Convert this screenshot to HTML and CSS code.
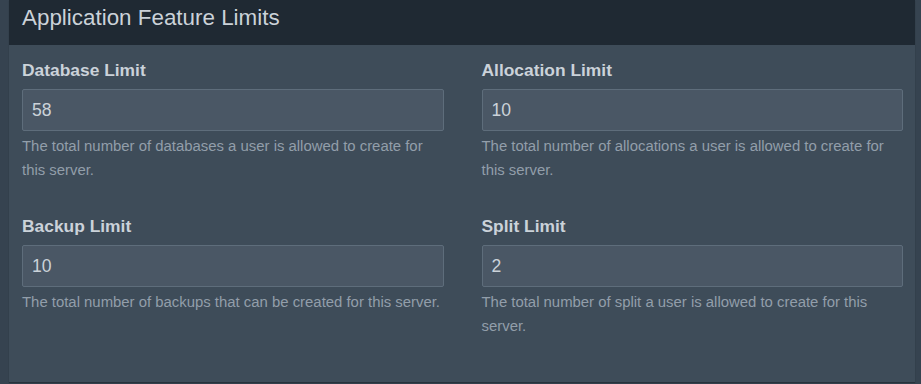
FILE: index.html
```html
<!DOCTYPE html>
<html>
<head>
<meta charset="utf-8">
<link rel="stylesheet" href="styles.css">
</head>
<body>
<div class="page">
  <div class="box">
    <div class="box-header"><h3 class="box-title">Application Feature Limits</h3></div>
    <div class="box-body">
      <div class="field">
        <label class="label">Database Limit</label>
        <div class="input">58</div>
        <p class="help">The total number of databases a user is allowed to create for this server.</p>
      </div>
      <div class="field">
        <label class="label">Allocation Limit</label>
        <div class="input">10</div>
        <p class="help">The total number of allocations a user is allowed to create for this server.</p>
      </div>
      <div class="field">
        <label class="label">Backup Limit</label>
        <div class="input">10</div>
        <p class="help">The total number of backups that can be created for this server.</p>
      </div>
      <div class="field">
        <label class="label">Split Limit</label>
        <div class="input">2</div>
        <p class="help">The total number of split a user is allowed to create for this server.</p>
      </div>
    </div>
  </div>
</div>
</body>
</html>
```
FILE: styles.css
```css
html, body {
  margin: 0;
  padding: 0;
  background: #364350;
  font-family: "Liberation Sans", Arial, sans-serif;
}
.page {
  padding: 0 6px 0 9px;
  height: 384px;
  box-sizing: border-box;
}
.box {
  background: #3e4c59;
  height: 382px;
  box-shadow: 0 1px 1px rgba(0,0,0,0.25);
}
.box-header {
  background: #1f2933;
  height: 45px;
  padding: 0 13px;
  box-sizing: border-box;
}
.box-title {
  margin: 0;
  font-weight: normal;
  font-size: 22.4px;
  line-height: 35px;
  color: #cbd2d9;
}
.box-body {
  display: grid;
  grid-template-columns: 1fr 1fr;
  column-gap: 38px;
  row-gap: 0;
  padding: 14px 12px 0 13px;
}
.field {
  display: flex;
  flex-direction: column;
  min-height: 156px;
}
.label {
  font-weight: bold;
  font-size: 17.4px;
  line-height: 22px;
  color: #cbd2d9;
  margin: 0 0 8px;
}
.input {
  height: 42px;
  box-sizing: border-box;
  border: 1px solid #5e6d7b;
  border-radius: 2px;
  background: #4a5765;
  color: #cbd2d9;
  font-size: 17.6px;
  line-height: 40px;
  padding: 0 9px;
}
.help {
  margin: 3px 0 0;
  font-size: 14.9px;
  line-height: 24px;
  color: #929eaa;
}
```
